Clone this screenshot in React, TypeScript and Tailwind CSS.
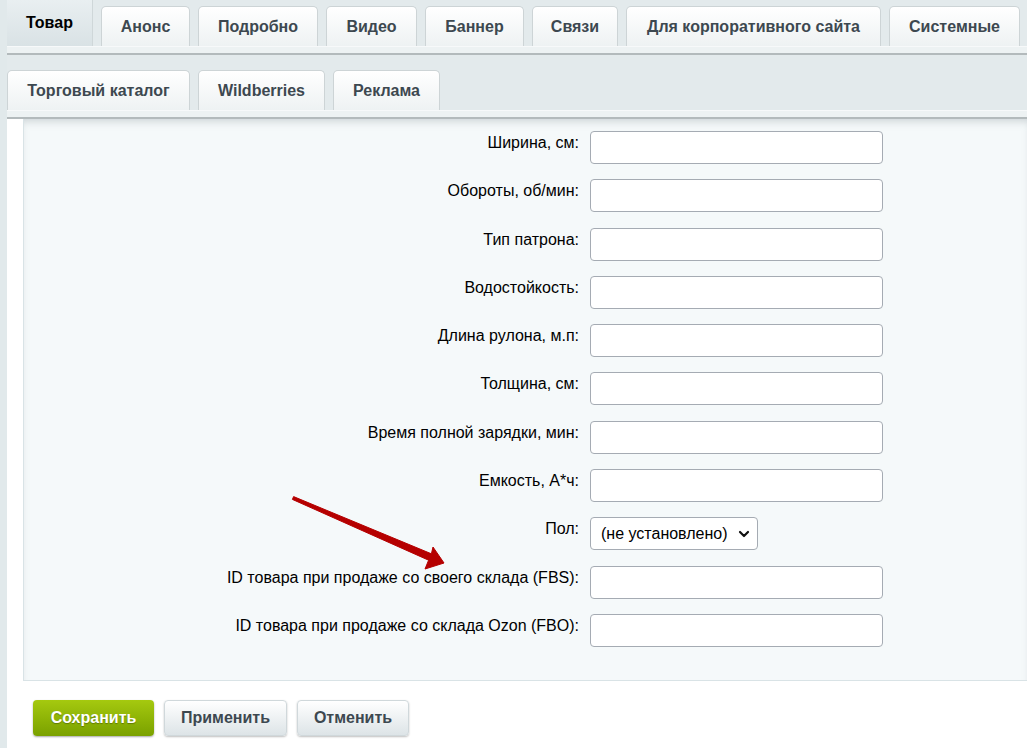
import React from "react"

const row1 = [
  { label: "Товар", w: "w-[86px]", active: true },
  { label: "Анонс", w: "w-[89px]" },
  { label: "Подробно", w: "w-[120px]" },
  { label: "Видео", w: "w-[91px]" },
  { label: "Баннер", w: "w-[99px]" },
  { label: "Связи", w: "w-[86px]" },
  { label: "Для корпоративного сайта", w: "w-[255px]" },
  { label: "Системные", w: "w-[131px]" },
]

const row2 = [
  { label: "Торговый каталог", w: "w-[183px]" },
  { label: "Wildberries", w: "w-[127px]" },
  { label: "Реклама", w: "w-[107px]" },
]

const fields = [
  "Ширина, см:",
  "Обороты, об/мин:",
  "Тип патрона:",
  "Водостойкость:",
  "Длина рулона, м.п:",
  "Толщина, см:",
  "Время полной зарядки, мин:",
  "Емкость, А*ч:",
  "SELECT",
  "ID товара при продаже со своего склада (FBS):",
  "ID товара при продаже со склада Ozon (FBO):",
]

function Tab({ label, w, active }: { label: string; w: string; active?: boolean }) {
  if (active) {
    return (
      <div
        className={`${w} h-[46px] flex items-center justify-center pb-[1px] shrink-0 bg-gradient-to-b from-[#e9eff1] to-[#d9e2e5] border-r border-[#cfd7d9] text-[16px] font-bold text-black`}
      >
        {label}
      </div>
    )
  }
  return (
    <div
      className={`${w} h-[40px] flex items-center justify-center shrink-0 rounded-t-[5px] border border-b-0 border-[#cdd4d6] bg-gradient-to-b from-white to-[#eef2f3] text-[16px] font-bold text-[#3d4850]`}
    >
      {label}
    </div>
  )
}

function Strip() {
  return <div className="h-[9px] bg-[#edf2f3] border-t border-[#f7f9fa] border-b-2 border-b-[#b3babc]" />
}

function Field({ label }: { label: string }) {
  if (label === "SELECT") {
    return (
      <div className="flex h-[33px]">
        <div className="w-[566px] pr-[11px] text-right text-[16px] text-black">Пол:</div>
        <div className="w-[168px] h-[33px] rounded-[4px] border border-[#a5abb3] bg-white flex items-center justify-between pl-[10px] pr-[7px] text-[16px] text-black">
          <span>(не установлено)</span>
          <svg width="12" height="12" viewBox="0 0 12 12">
            <path d="M2 4 L6 8 L10 4" fill="none" stroke="#111" strokeWidth="2.2" strokeLinecap="round" strokeLinejoin="round" />
          </svg>
        </div>
      </div>
    )
  }
  return (
    <div className="flex h-[33px]">
      <div className="w-[566px] pr-[11px] text-right text-[16px] text-black whitespace-nowrap">{label}</div>
      <div className="w-[293px] h-[33px] rounded-[4px] border border-[#a5abb3] bg-white" />
    </div>
  )
}

export default function App() {
  return (
    <div
      className="relative flex w-[1027px] h-[748px] overflow-hidden bg-white"
      style={{ fontFamily: '"Liberation Sans", Arial, sans-serif' }}
    >
      <div className="w-[7px] shrink-0 bg-[#e1e9eb]" />
      <div className="flex-1 flex flex-col min-w-0">
        <div className="bg-[#e3eaec]">
          <div className="flex items-end gap-[8px] h-[46px]">
            {row1.map((t) => (
              <Tab key={t.label} {...t} />
            ))}
          </div>
          <Strip />
          <div className="flex items-end gap-[8px] h-[55px]">
            {row2.map((t) => (
              <Tab key={t.label} {...t} />
            ))}
          </div>
          <Strip />
        </div>
        <div className="flex">
          <div className="w-[16px] shrink-0 bg-white" />
          <div className="flex-1 bg-[#f5f9fa] border-l border-b border-[#d9e3e6] shadow-[inset_0_6px_8px_-4px_rgba(120,135,140,0.35)] pt-[12px] pb-[33px] flex flex-col gap-[15.3px]">
            {fields.map((f) => (
              <Field key={f} label={f} />
            ))}
          </div>
        </div>
        <div className="flex gap-[10px] pl-[26px] pt-[19px]">
          <button className="w-[121px] h-[36px] rounded-[4px] bg-gradient-to-b from-[#a5c90f] to-[#7aa100] shadow-[0_1px_2px_rgba(0,0,0,0.35)] text-[16px] font-bold text-white [text-shadow:0_1px_1px_rgba(0,0,0,0.3)]">
            Сохранить
          </button>
          <button className="w-[123px] h-[36px] rounded-[4px] border border-[#d0d8db] bg-gradient-to-b from-white to-[#dde4e7] shadow-[0_1px_2px_rgba(0,0,0,0.25)] text-[16px] font-bold text-[#3d4850]">
            Применить
          </button>
          <button className="w-[112px] h-[36px] rounded-[4px] border border-[#d0d8db] bg-gradient-to-b from-white to-[#dde4e7] shadow-[0_1px_2px_rgba(0,0,0,0.25)] text-[16px] font-bold text-[#3d4850]">
            Отменить
          </button>
        </div>
      </div>
      <svg className="absolute left-0 top-0 pointer-events-none" width="1027" height="748">
        <polygon
          points="293.6,496.6 431.4,553.8 433,547 444,563 425,569 428.6,560.2 292.4,499.4"
          fill="#b50000"
          stroke="#b50000"
          strokeWidth="1"
          strokeLinejoin="round"
        />
      </svg>
    </div>
  )
}
